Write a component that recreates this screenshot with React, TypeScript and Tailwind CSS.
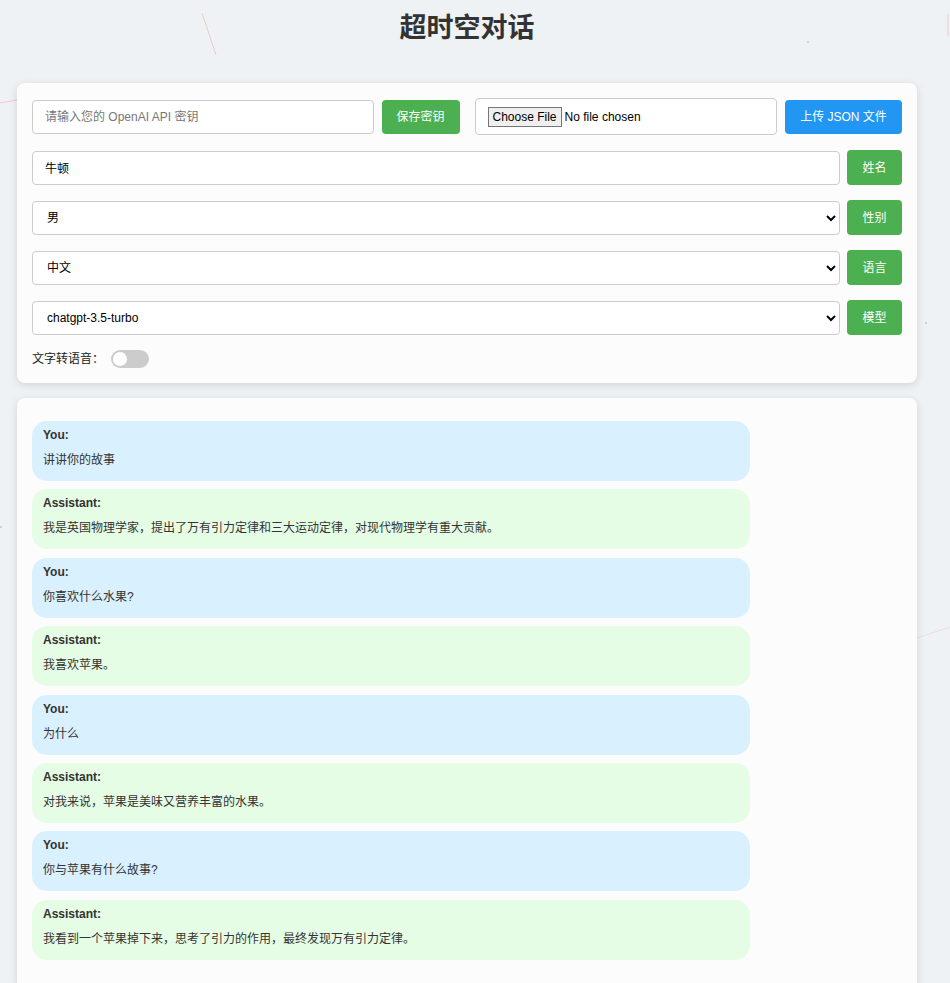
import { useState } from 'react'

const messages = [
  { role: 'You', text: '讲讲你的故事' },
  { role: 'Assistant', text: '我是英国物理学家，提出了万有引力定律和三大运动定律，对现代物理学有重大贡献。' },
  { role: 'You', text: '你喜欢什么水果?' },
  { role: 'Assistant', text: '我喜欢苹果。' },
  { role: 'You', text: '为什么' },
  { role: 'Assistant', text: '对我来说，苹果是美味又营养丰富的水果。' },
  { role: 'You', text: '你与苹果有什么故事?' },
  { role: 'Assistant', text: '我看到一个苹果掉下来，思考了引力的作用，最终发现万有引力定律。' },
]

const font = "font-['Liberation_Sans','Noto_Sans_CJK_SC',sans-serif]"

function GreenButton({ children }: { children: React.ReactNode }) {
  return (
    <button className="h-[35px] w-[55px] shrink-0 rounded-[4px] bg-[#4caf50] text-[12px] text-white">
      {children}
    </button>
  )
}

function Background() {
  return (
    <svg className="pointer-events-none absolute inset-0 h-full w-full" width="950" height="983">
      <line x1="202" y1="13" x2="216" y2="55" stroke="#f3c6cc" strokeWidth="1" />
      <line x1="0" y1="103" x2="40" y2="96" stroke="#f3c6cc" strokeWidth="1" />
      <line x1="948" y1="14" x2="948" y2="36" stroke="#f3c6cc" strokeWidth="1" />
      <line x1="917" y1="638" x2="950" y2="627" stroke="#eadde2" strokeWidth="1" />
      <line x1="220" y1="897" x2="240" y2="889" stroke="#f3dde2" strokeWidth="1" />
      <circle cx="808" cy="42" r="0.8" fill="#9aa" />
      <circle cx="926" cy="323" r="0.8" fill="#9aa" />
      <circle cx="1" cy="527" r="0.8" fill="#9aa" />
    </svg>
  )
}

export default function App() {
  const [tts, setTts] = useState(false)

  return (
    <div className={`relative min-h-screen overflow-hidden bg-[#eef2f5] text-[#333] ${font}`}>
      <Background />
      <div className="relative ml-[17px] w-[900px]">
        <h1 className="pt-[12px] text-center text-[27px] font-bold leading-[32px] text-[#333]">超时空对话</h1>

        {/* settings card */}
        <div className="mt-[39px] rounded-[8px] bg-[#fcfcfc] p-[15px] shadow-[0_2px_8px_rgba(0,0,0,0.12)]">
          <div className="flex h-[37px] items-center gap-[15px]">
            <div className="flex flex-1 items-center gap-[8px]">
              <input
                className="h-[34px] min-w-0 flex-1 rounded-[4px] border border-[#ccc] bg-white px-[12px] text-[12px] outline-none placeholder:text-[#777]"
                placeholder="请输入您的 OpenAI API 密钥"
              />
              <button className="h-[34px] w-[78px] shrink-0 rounded-[4px] bg-[#4caf50] text-[12px] text-white">保存密钥</button>
            </div>
            <div className="flex flex-1 items-center gap-[8px]">
              <div className="flex h-[37px] min-w-0 flex-1 items-center rounded-[4px] border border-[#ccc] bg-white px-[12px]">
                <input type="file" className="text-[12px] text-black file:mr-[3px] file:border file:border-[#767676] file:bg-[#efefef] file:px-[4px] file:text-[12px] file:text-black" />
              </div>
              <button className="h-[34px] w-[117px] shrink-0 rounded-[4px] bg-[#2196f3] text-[12px] text-white">上传 JSON 文件</button>
            </div>
          </div>

          <div className="mt-[15px] flex h-[35px] items-center gap-[7px]">
            <input
              className="h-[34px] min-w-0 flex-1 rounded-[4px] border border-[#ccc] bg-white px-[12px] text-[12px] text-black outline-none"
              defaultValue="牛顿"
            />
            <GreenButton>姓名</GreenButton>
          </div>

          <div className="mt-[15px] flex h-[35px] items-center gap-[7px]">
            <select className="h-[34px] min-w-0 flex-1 rounded-[4px] border border-[#ccc] bg-white px-[10px] text-[12px] text-black outline-none" defaultValue="男">
              <option>男</option>
              <option>女</option>
            </select>
            <GreenButton>性别</GreenButton>
          </div>

          <div className="mt-[15px] flex h-[35px] items-center gap-[7px]">
            <select className="h-[34px] min-w-0 flex-1 rounded-[4px] border border-[#ccc] bg-white px-[10px] text-[12px] text-black outline-none" defaultValue="中文">
              <option>中文</option>
              <option>English</option>
            </select>
            <GreenButton>语言</GreenButton>
          </div>

          <div className="mt-[15px] flex h-[35px] items-center gap-[7px]">
            <select className="h-[34px] min-w-0 flex-1 rounded-[4px] border border-[#ccc] bg-white px-[10px] text-[12px] text-black outline-none" defaultValue="chatgpt-3.5-turbo">
              <option>chatgpt-3.5-turbo</option>
              <option>gpt-4</option>
            </select>
            <GreenButton>模型</GreenButton>
          </div>

          <div className="mt-[15px] flex h-[18px] items-center text-[12px] text-[#222]">
            <span>文字转语音：</span>
            <button
              onClick={() => setTts(!tts)}
              className={`relative ml-[7px] h-[18px] w-[38px] rounded-full ${tts ? 'bg-[#4caf50]' : 'bg-[#ccc]'}`}
            >
              <span className={`absolute top-[2px] h-[14px] w-[14px] rounded-full bg-white ${tts ? 'left-[22px]' : 'left-[2px]'}`} />
            </button>
          </div>
        </div>

        {/* chat card */}
        <div className="mt-[15px] rounded-[8px] bg-[#fcfcfc] px-[15px] pb-[30px] pt-[23px] shadow-[0_2px_8px_rgba(0,0,0,0.12)]">
          <div className="flex flex-col gap-[8.4px]">
            {messages.map((m, i) => (
              <div
                key={i}
                className={`h-[60px] w-[718px] rounded-[15px] px-[11px] pt-[7px] ${m.role === 'You' ? 'bg-[#d9f0fe]' : 'bg-[#e5fde5]'}`}
              >
                <div className="text-[12px] font-bold leading-[14px] text-[#333]">{m.role}:</div>
                <div className="mt-[9px] text-[12px] leading-[18px] text-[#333]">{m.text}</div>
              </div>
            ))}
          </div>
        </div>
      </div>
    </div>
  )
}
